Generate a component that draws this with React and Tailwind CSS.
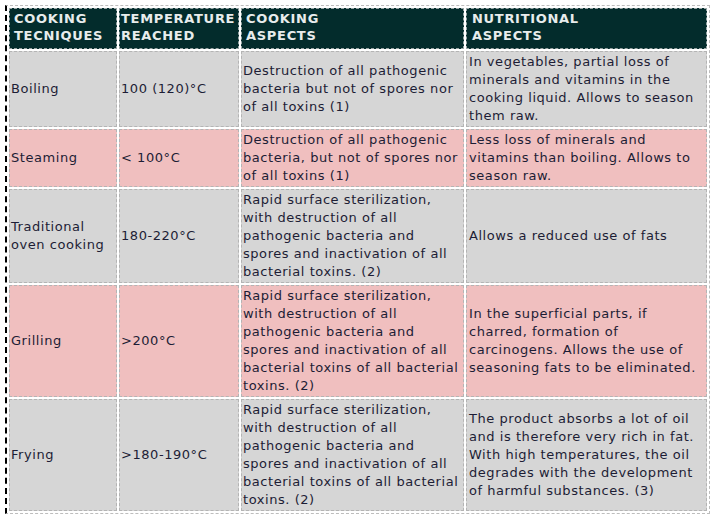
import React from "react"

const rows = [
  {
    name: ["Boiling"],
    temp: "100 (120)°C",
    cooking: ["Destruction of all pathogenic", "bacteria but not of spores nor", "of all toxins (1)"],
    nutrition: ["In vegetables, partial loss of", "minerals and vitamins in the", "cooking liquid. Allows to season", "them raw."],
    pink: false,
  },
  {
    name: ["Steaming"],
    temp: "< 100°C",
    cooking: ["Destruction of all pathogenic", "bacteria, but not of spores nor", "of all toxins (1)"],
    nutrition: ["Less loss of minerals and", "vitamins than boiling. Allows to", "season raw."],
    pink: true,
  },
  {
    name: ["Traditional", "oven cooking"],
    temp: "180-220°C",
    cooking: ["Rapid surface sterilization,", "with destruction of all", "pathogenic bacteria and", "spores and inactivation of all", "bacterial toxins. (2)"],
    nutrition: ["Allows a reduced use of fats"],
    pink: false,
  },
  {
    name: ["Grilling"],
    temp: ">200°C",
    cooking: ["Rapid surface sterilization,", "with destruction of all", "pathogenic bacteria and", "spores and inactivation of all", "bacterial toxins of all bacterial", "toxins. (2)"],
    nutrition: ["In the superficial parts, if", "charred, formation of", "carcinogens. Allows the use of", "seasoning fats to be eliminated."],
    pink: true,
  },
  {
    name: ["Frying"],
    temp: ">180-190°C",
    cooking: ["Rapid surface sterilization,", "with destruction of all", "pathogenic bacteria and", "spores and inactivation of all", "bacterial toxins of all bacterial", "toxins. (2)"],
    nutrition: ["The product absorbs a lot of oil", "and is therefore very rich in fat.", "With high temperatures, the oil", "degrades with the development", "of harmful substances. (3)"],
    pink: false,
  },
]

function Lines({ lines })
{
  return lines.map((l, i) => <div key={i} className="whitespace-nowrap">{l}</div>)
}

export default function App()
{
  const th = "bg-[#032c2c] text-[#e8ecec] font-bold uppercase tracking-[0.7px] text-left align-top border border-dashed border-[#9aa6a6] leading-[17px] pt-[1px] pb-[4px] whitespace-nowrap overflow-visible"
  return (
    <div className="pt-[5px] pl-[5px] bg-white min-h-screen" style={{ fontFamily: '"DejaVu Sans", Verdana, sans-serif' }}>
      <table className="table-fixed border-separate border-spacing-[2px] w-[705px] border border-dashed border-[#bdbdbd] border-l-2 border-l-black border-l-solid text-[13px] leading-[18px] tracking-[0.55px] text-[#1d1d35]">
        <colgroup>
          <col className="w-[108px]" />
          <col className="w-[120px]" />
          <col className="w-[223px]" />
          <col className="w-[241px]" />
        </colgroup>
        <thead>
          <tr>
            <th className={`${th} pl-[4px]`}>Cooking<br />tecniques</th>
            <th className={`${th} pl-[1px]`}>Temperature<br />reached</th>
            <th className={`${th} pl-[4px]`}>Cooking<br />aspects</th>
            <th className={`${th} pl-[5px]`}>Nutritional<br />aspects</th>
          </tr>
        </thead>
        <tbody>
          {rows.map((r, i) => {
            const td = `align-middle border border-dashed border-[#b4b4b4] py-[1px] ${r.pink ? "bg-[#f0bfbf]" : "bg-[#d6d6d6]"}`
            return (
              <tr key={i}>
                <td className={`${td} pl-[1px]`}><Lines lines={r.name} /></td>
                <td className={`${td} pl-[1px]`}>{r.temp}</td>
                <td className={`${td} pl-[1px]`}><Lines lines={r.cooking} /></td>
                <td className={`${td} pl-[2px]`}><Lines lines={r.nutrition} /></td>
              </tr>
            )
          })}
        </tbody>
      </table>
    </div>
  )
}
